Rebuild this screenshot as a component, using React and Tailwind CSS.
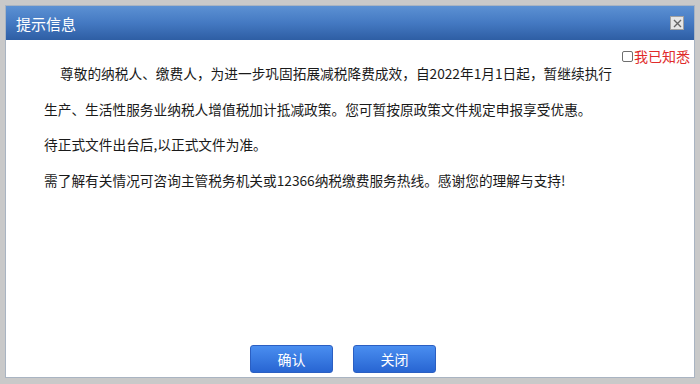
export default function App() {
  const font = { fontFamily: '"Microsoft YaHei", "Noto Sans CJK SC", sans-serif' };

  return (
    <div
      className="w-[700px] h-[384px] bg-[#c9c9c9] pt-[5px] pl-[5px] pr-[5px] pb-[6px] overflow-hidden"
      style={font}
    >
      <div className="w-[690px] h-[373px] flex flex-col bg-white border border-[#a9b4c2]">
        {/* title bar */}
        <div className="h-[34px] shrink-0 flex items-center justify-between pl-[10px] pr-[10px] bg-gradient-to-b from-[#5c91d3] via-[#4479c2] to-[#2e5ea4]">
          <span className="text-white text-[15px] leading-none">提示信息</span>
          <button className="w-[14px] h-[14px] flex items-center justify-center bg-[#e6e6e6] border border-[#a0a0a0]">
            <svg width="9" height="9" viewBox="0 0 9 9">
              <path d="M1 1 L8 8 M8 1 L1 8" stroke="#666" strokeWidth="1.4" />
            </svg>
          </button>
        </div>

        {/* body */}
        <div className="flex-1 flex flex-col">
          <div className="h-[16px] mt-[8px] flex items-center justify-end pr-[4px]">
            <span className="w-[11px] h-[11px] border-[1.5px] border-[#6f6f6f] rounded-[2px] bg-white mr-[1px]" />
            <span className="text-[14px] text-[#e02b2b] leading-none">我已知悉</span>
          </div>

          <div className="mt-[-8px] pl-[38px] text-[13.7px] text-[#1a1a1a] leading-[35.5px]">
            <p className="whitespace-nowrap pl-[16px]">
              尊敬的纳税人、缴费人，为进一步巩固拓展减税降费成效，自2022年1月1日起，暂继续执行
            </p>
            <p className="whitespace-nowrap">
              生产、生活性服务业纳税人增值税加计抵减政策。您可暂按原政策文件规定申报享受优惠。
            </p>
            <p className="whitespace-nowrap">待正式文件出台后,以正式文件为准。</p>
            <p className="whitespace-nowrap">
              需了解有关情况可咨询主管税务机关或12366纳税缴费服务热线。感谢您的理解与支持!
            </p>
          </div>

          <div className="mt-auto pb-[4px] flex justify-center gap-[20px] pr-[14px]">
            <button className="w-[83px] h-[28px] rounded-[3px] border border-[#2b5fc2] bg-gradient-to-b from-[#4a8ef0] to-[#2865d2] text-white text-[14px]">
              确认
            </button>
            <button className="w-[83px] h-[28px] rounded-[3px] border border-[#2b5fc2] bg-gradient-to-b from-[#4a8ef0] to-[#2865d2] text-white text-[14px]">
              关闭
            </button>
          </div>
        </div>
      </div>
    </div>
  );
}
